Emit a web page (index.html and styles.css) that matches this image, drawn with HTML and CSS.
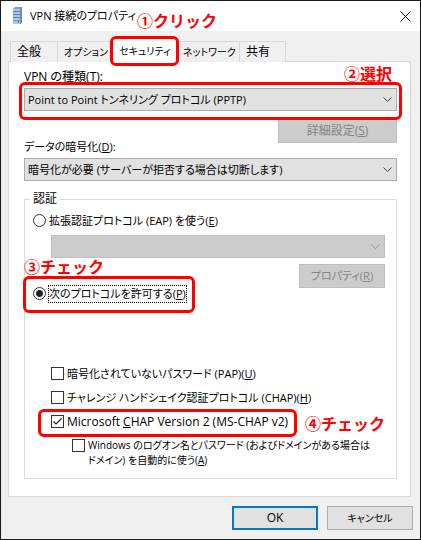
FILE: index.html
```html
<!DOCTYPE html>
<html lang="ja">
  <head>
    <meta charset="UTF-8" />
    <meta name="viewport" content="width=device-width, initial-scale=1.0" />
    <title>VPN 接続のプロパティ</title>
    <link rel="stylesheet" href="styles.css">
  </head>
  <body>
    <form class="dialog" action="#">
      <header class="titlebar">
        <svg class="server" width="10" height="18" viewBox="0 0 10 18">
          <path d="M1 2 L3 0 H10 V15 L8 17 H1 Z" fill="#7f9fc0" />
          <path d="M8 2 L10 0 V15 L8 17 Z" fill="#6d8bad" />
          <rect x="1" y="2" width="7" height="15" fill="#a9c7e2" />
          <path d="M1 4.5 H8 M1 7.5 H8 M1 10.5 H8" stroke="#5c80a6" />
          <path d="M1 13.5 H8" stroke="#7598bb" />
          <rect x="6" y="14" width="1" height="2" fill="#3d6ea0" />
        </svg>
        <h1>VPN 接続のプロパティ</h1>
        <button class="close" type="button" aria-label="閉じる">
          <svg width="11" height="11" viewBox="0 0 11 11">
            <path d="M0.5 0.5 L10.5 10.5 M10.5 0.5 L0.5 10.5" stroke="#111" fill="none" />
          </svg>
        </button>
        <span class="note note-click">①クリック</span>
      </header>

      <main class="content">
        <nav class="tabs">
          <button class="tab large" type="button">全般</button>
          <button class="tab small" type="button">オプション</button>
          <div class="tab-current">
            <button class="tab active small" type="button">セキュリティ</button>
            <span class="mark mark-tab"></span>
          </div>
          <button class="tab small" type="button">ネットワーク</button>
          <button class="tab large" type="button">共有</button>
        </nav>

        <section class="panel">
          <label class="label large" for="vpnType">VPN の種類(<u>T</u>):</label>
          <div class="combo">
            <select id="vpnType">
              <option>Point to Point トンネリング プロトコル (PPTP)</option>
            </select>
            <svg class="arrow" width="9" height="6" viewBox="0 0 9 6"><path d="M0.5 0.5 L4.5 4.5 L8.5 0.5" /></svg>
            <span class="mark mark-combo"></span>
            <span class="note note-select">②選択</span>
          </div>

          <div class="row">
            <label class="label" for="encryption">データの暗号化(<u>D</u>):</label>
            <button class="btn wide large" type="button" disabled>詳細設定(<u>S</u>)</button>
          </div>
          <div class="combo">
            <select id="encryption">
              <option>暗号化が必要 (サーバーが拒否する場合は切断します)</option>
            </select>
            <svg class="arrow" width="9" height="6" viewBox="0 0 9 6"><path d="M0.5 0.5 L4.5 4.5 L8.5 0.5" /></svg>
          </div>

          <fieldset class="auth">
            <legend class="large">認証</legend>
            <div class="option">
              <input type="radio" name="auth" id="eap">
              <label for="eap">拡張認証プロトコル (EAP) を使う(<u>E</u>)</label>
            </div>
            <div class="combo eap-combo">
              <select aria-label="EAP" disabled></select>
              <svg class="arrow" width="9" height="6" viewBox="0 0 9 6"><path d="M0.5 0.5 L4.5 4.5 L8.5 0.5" /></svg>
            </div>
            <div class="row allow-row">
              <div class="option">
                <input type="radio" name="auth" id="allow" checked>
                <label class="focused" for="allow">次のプロトコルを許可する(<u>P</u>)</label>
                <span class="mark mark-allow"></span>
                <span class="note note-allow">③チェック</span>
              </div>
              <button class="btn" type="button" disabled>プロパティ(<u>R</u>)</button>
            </div>

            <div class="protocols">
              <div class="option">
                <input type="checkbox" id="pap">
                <label for="pap">暗号化されていないパスワード (PAP)(<u>U</u>)</label>
              </div>
              <div class="option">
                <input type="checkbox" id="chap">
                <label for="chap">チャレンジ ハンドシェイク認証プロトコル (CHAP)(<u>H</u>)</label>
              </div>
              <div class="option">
                <input type="checkbox" id="mschap" checked>
                <label class="large" for="mschap">Microsoft <u>C</u>HAP Version 2 (MS-CHAP v2)</label>
                <span class="mark mark-chap"></span>
                <span class="note note-chap">④チェック</span>
              </div>
              <div class="option sub">
                <input type="checkbox" id="logon">
                <label class="small" for="logon">Windows のログオン名とパスワード (およびドメインがある場合は<br>ドメイン) を自動的に使う(<u>A</u>)</label>
              </div>
            </div>
          </fieldset>
        </section>
      </main>

      <footer class="actions">
        <button class="btn ok large" type="submit">OK</button>
        <button class="btn small" type="button">キャンセル</button>
      </footer>
    </form>
  </body>
</html>
```
FILE: styles.css
```css
* {
  box-sizing: border-box;
}
body {
  margin: 0;
  background-color: #f0f0f0;
}
body,
button,
select {
  font-family: "Open Sans", "Noto Sans CJK JP", sans-serif;
  font-size: 11px;
  line-height: 16px;
  font-feature-settings: "palt";
  color: #000;
}
.large {
  font-size: 12px;
}
.small {
  font-size: 10px;
}
u {
  text-underline-offset: 1px;
}

.dialog {
  min-height: 100vh;
  border: 1px solid #1a1a1a;
}
.titlebar {
  position: relative;
  display: flex;
  align-items: center;
  height: 30px;
  padding: 0 9px 0 11px;
  background-color: #fff;
}
.titlebar h1 {
  flex: 1;
  margin: 0 0 0 8px;
  font-size: 11px;
  font-weight: normal;
}
.close {
  display: flex;
  padding: 0;
  border: none;
  background: none;
}

.content {
  padding: 10px 9px 0 7px;
}
.tabs {
  display: grid;
  grid-template-columns: 47px 55px 64px 63px 47px;
  height: 20px;
  padding-left: 2px;
}
.tab {
  width: 100%;
  padding: 0 0 0 6px;
  border: 1px solid #d9d9d9;
  border-right: none;
  border-bottom: none;
  background-color: #f0f0f0;
  text-align: left;
  white-space: nowrap;
}
.tab:last-child {
  border-right: 1px solid #d9d9d9;
}
.tab-current {
  position: relative;
  margin-top: -3px;
}
.tab.active {
  position: relative;
  height: 24px;
  background-color: #fff;
}

.panel {
  padding: 7px 13px 17px 15px;
  border: 1px solid #d9d9d9;
  background-color: #fff;
}
.label {
  display: block;
}
.combo {
  position: relative;
  margin-top: 3px;
}
select {
  display: block;
  width: 100%;
  height: 23px;
  padding: 0 20px 0 3px;
  border: 1px solid #adadad;
  border-radius: 0;
  background-color: #e1e1e1;
  appearance: none;
}
select:disabled {
  border-color: #bfbfbf;
  background-color: #ccc;
  opacity: 1;
}
.arrow {
  position: absolute;
  top: 9px;
  right: 5px;
  fill: none;
  stroke: #444;
}
select:disabled + .arrow {
  stroke: #999;
}
.row {
  display: flex;
  justify-content: space-between;
  align-items: flex-end;
  height: 36px;
  margin-top: 8px;
}
.btn {
  width: 86px;
  height: 24px;
  padding: 0;
  border: 1px solid #adadad;
  background-color: #e1e1e1;
}
.btn:disabled {
  align-self: flex-start;
  border-color: #bfbfbf;
  background-color: #ccc;
  color: #838383;
}
.wide {
  width: 119px;
}
.ok {
  border: 2px solid #0078d7;
}

.auth {
  min-width: 0;
  margin: 10px 0 0;
  padding: 0 11px 10px 8px;
  border: 1px solid #dcdcdc;
}
.auth legend {
  margin-left: -3px;
  padding: 0 3px;
}
.option {
  position: relative;
  display: flex;
  gap: 3px;
}
.auth > .option {
  margin-top: 6px;
}
.eap-combo {
  margin: 6px 0 0 18px;
}
.allow-row {
  height: 38px;
  margin-top: 6px;
}
.focused {
  outline: 1px dotted #000;
}
input {
  flex: none;
  width: 13px;
  height: 13px;
  margin: 1px 0 0;
  border: 1px solid #333;
  background-color: #fff;
  appearance: none;
}
input[type="radio"] {
  border-radius: 50%;
}
input[type="radio"]:checked {
  background-image: radial-gradient(circle, #222 3px, transparent 4px);
}
input[type="checkbox"]:checked {
  background-image: url("data:image/svg+xml,%3Csvg xmlns='http://www.w3.org/2000/svg' viewBox='0 0 11 11'%3E%3Cpath d='M1.5 5.5 L4 8 L9.5 2.5' fill='none' stroke='%23222' stroke-width='1.2'/%3E%3C/svg%3E");
}
.protocols {
  display: flex;
  flex-direction: column;
  gap: 8px;
  margin: 64px 0 0 18px;
}
.sub {
  margin-left: 21px;
  white-space: nowrap;
}
.sub label {
  line-height: 15px;
}

.actions {
  display: flex;
  justify-content: flex-end;
  gap: 9px;
  padding: 9px 7px 8px;
}

/* red guide marks */
.mark {
  position: absolute;
  border: 3px solid #f00;
  border-radius: 6px;
  pointer-events: none;
}
.mark-tab {
  inset: -2px -3px -4px -2px;
  z-index: 1;
}
.mark-combo {
  inset: -6px -5px -9px -5px;
  z-index: 1;
}
.mark-allow {
  inset: -10px -9px -11px -10px;
}
.mark-chap {
  top: -5px;
  left: -13px;
  width: 259px;
  height: 28px;
}
.note {
  position: absolute;
  font-size: 16px;
  line-height: 20px;
  font-weight: bold;
  font-family: "Noto Sans CJK JP", sans-serif;
  font-feature-settings: normal;
  color: #f00;
  white-space: nowrap;
}
.note-click {
  top: 9px;
  left: 136px;
}
.note-select {
  top: -25px;
  right: 5px;
}
.note-allow {
  top: -30px;
  left: -9px;
}
.note-chap {
  top: -1px;
  left: 254px;
}
```
